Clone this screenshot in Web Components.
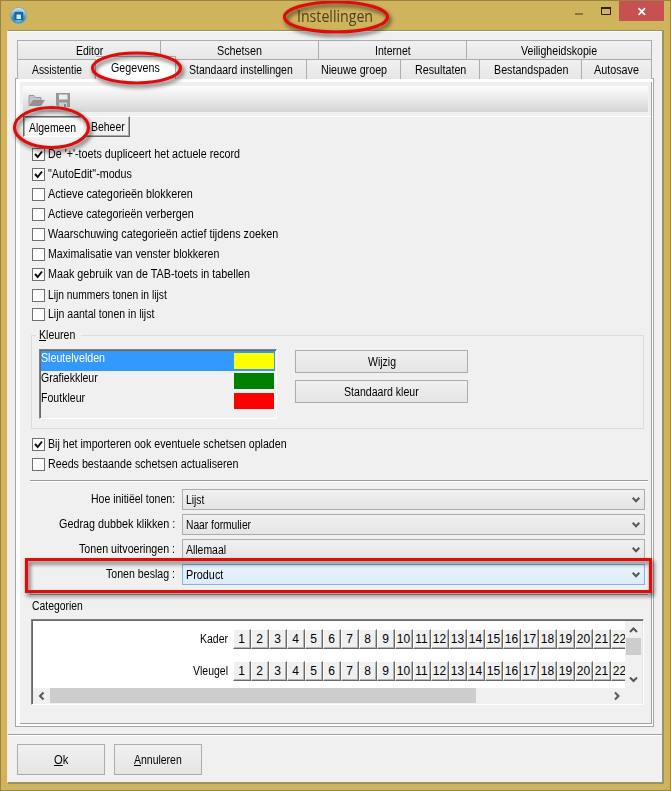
<!DOCTYPE html>
<html lang="nl">
<head>
<meta charset="utf-8">
<title>Instellingen</title>
<style>
html,body{margin:0;height:100%;overflow:hidden}
body{font:12px/14px "Liberation Sans",Arial,sans-serif;color:#000}
</style>
</head>
<body>
<settings-window></settings-window>
<script>
const define=(name,css,html,after)=>customElements.define(name,class extends HTMLElement{
  connectedCallback(){
    if(this.shadowRoot)return;
    const r=this.attachShadow({mode:'open'});
    const t=document.createElement('template');
    t.innerHTML=`<style>*{box-sizing:border-box}:host{box-sizing:border-box}${css}</style>`+(typeof html==='function'?html(this):html);
    r.append(t.content.cloneNode(true));
    if(after)after(this,r);
  }
});

// Condenses its text to the width given in "w".
define('fit-text',':host{display:inline-block;white-space:nowrap;text-align:left;flex:none}span{display:inline-block;transform-origin:0 0}','<span><slot></slot></span>',(h,r)=>{
  const s=r.querySelector('span'),w=+h.getAttribute('w');
  s.style.transform=`scaleX(${w/s.offsetWidth})`;
  h.style.width=w+'px';
});

define('title-bar',`
:host{display:flex;height:30px;position:relative;align-items:flex-start;justify-content:space-between}
.logo{margin:6px 0 0 8.5px;display:block}
.title{position:absolute;left:296px;top:4px;font:16px/22px "Open Sans",sans-serif;color:#4d3f1d}
.controls{display:flex;align-items:flex-start;margin-right:6px}
svg{display:block}
.close{width:45px;height:20px;background:#c75050;margin-top:0}`,`
<svg class="logo" width="17" height="17" viewBox="0 0 17 17"><defs><radialGradient id="g" cx=".5" cy=".75" r=".75"><stop offset="0" stop-color="#6fd0f5"/><stop offset=".45" stop-color="#2b84bd"/><stop offset=".8" stop-color="#a9cfe2"/><stop offset="1" stop-color="#e8f3f6"/></radialGradient></defs><circle cx="8.5" cy="8.5" r="8" fill="url(#g)" stroke="#6fa0b5" stroke-width=".8"/><path d="M4.500 5h8.500v8H4.500z" fill="#1762a0"/><path d="M6.500 7.500h4.500v4.500h-4.500z" fill="#c6edfb"/></svg>
<div class="title"><fit-text w="76">Instellingen</fit-text></div>
<div class="controls"><svg width="44" height="20"><path d="M0 12h8v2H0z" fill="#8c7538"/><path d="M26.5 7h9v6.500h-9z" fill="none" stroke="#2a220b"/><path d="M26 7h10" stroke="#2a220b" stroke-width="2"/></svg><svg class="close" viewBox="0 0 45 20"><path d="M19.500 7.200l6.500 6.600M26 7.200l-6.500 6.600" stroke="#fff" stroke-width="1.8"/></svg></div>`);

define('tab-row',':host{display:flex;height:20px;border-left:1px solid #acacac}','<slot></slot>');
define('tab-item',`
:host{display:flex;justify-content:center;align-items:center;flex:none;width:var(--w);background:linear-gradient(#f1f1f1,#e6e6e6);border:1px solid #acacac;border-width:1px 1px 0 0;padding-top:1px;height:20px}
:host([on]){background:#fff;position:relative;height:23px;margin:-3px 0 0;border-color:#acacac;padding:0 0 1px}`,'<slot></slot>');

define('check-row',`
:host{display:flex;height:20px;align-items:center;gap:3px;padding-left:12px}
i{display:block;width:13px;height:13px;border:1px solid #707070;background:#fff}
svg{display:block}`,h=>`<i>${h.hasAttribute('on')?'<svg width="11" height="11"><path d="M2 5l2.7 3L9 2.500" fill="none" stroke="#111" stroke-width="2"/></svg>':''}</i><slot></slot>`);

define('push-button',':host{display:flex;align-items:center;justify-content:center;border:1px solid #acacac;background:linear-gradient(#f0f0f0,#e5e5e5)}','<slot></slot>');

define('combo-row',`
:host{display:flex;height:25px;align-items:flex-start}
.l{width:155px;text-align:right;padding-top:3px;flex:none}
.box{margin-left:7px;width:463px;height:21px;border:1px solid #acacac;background:linear-gradient(#f0f0f0,#e5e5e5);display:flex;align-items:center;justify-content:space-between;padding:1px 4px 0 3px}
:host([hot]) .box{border-color:#7eb4ea;background:linear-gradient(#e9f3fc,#dcecfc)}`,
`<div class="l"><slot name="label"></slot></div><div class="box"><slot></slot><svg width="8" height="6"><path d="M.7 .8L4 4.2 7.3 .8" fill="none" stroke="#555" stroke-width="2"/></svg></div>`);

define('color-row',`
:host{display:flex;height:20px;justify-content:space-between;padding:0 1px 0 0}
:host([on]){background:#39f;color:#fff}
i{display:block;width:40px;height:16px;margin-top:2px;background:var(--c)}`,'<slot></slot><i></i>');

define('group-box',`
:host{display:block;position:relative;margin:0 0 0 11px;width:613px;height:94px;border:1px solid #dcdcdc}
.leg{position:absolute;left:4px;top:-8px;background:#f0f0f0;padding:0 6px 0 3px;height:15px}
.in{display:flex;padding:13px 0 0 7px;gap:18px}
.list{width:238px;height:70px;border:1px solid;border-color:#808080 #fff #fff #808080;padding:1px;box-shadow:inset 1px 1px #696969}
.b{display:flex;flex-direction:column;gap:7px;padding-top:1px}
push-button{width:173px;height:23px}`,`
<div class="leg"><fit-text w="36"><u>K</u>leuren</fit-text></div>
<div class="in"><div class="list"><color-row on style="--c:#ff0"><fit-text w="64">Sleutelvelden</fit-text></color-row><color-row style="--c:#008000"><fit-text w="57">Grafiekkleur</fit-text></color-row><color-row style="--c:#f00"><fit-text w="44">Foutkleur</fit-text></color-row></div>
<div class="b"><push-button><fit-text w="28">Wijzig</fit-text></push-button><push-button><fit-text w="75">Standaard kleur</fit-text></push-button></div></div>`);

define('number-row',`
:host{display:flex;height:20px;overflow:hidden}
.l{width:195px;text-align:right;padding-top:3px;flex:none;margin-right:5px}
.n{flex:none;width:18px;height:20px;display:flex;justify-content:center;align-items:center;background:#f0f0f0;border:1px solid;border-color:#fff #696969 #696969 #fff;box-shadow:inset -1px -1px #b4b4b4;padding-right:1px}`,
h=>`<div class="l"><slot></slot></div>${Array.from({length:22},(_,i)=>`<div class="n">${i+1}</div>`).join('')}`);

define('category-grid',`
:host{display:grid;grid-template:67px 16px / 592px 17px;margin-left:11px;width:613px;height:86px;background:#fff;border:1px solid;border-color:#808080 #fff #fff #808080;box-shadow:inset 1px 1px #696969,inset -1px -1px #e3e3e3;padding:1px;overflow:hidden}
.rows{padding-top:8px;display:flex;flex-direction:column;gap:12px;overflow:hidden}
.v,.h,.c{background:#f0f0f0}
.v{display:flex;flex-direction:column;padding-left:1px}
.h{display:flex}
.tv{height:17px;background:#cdcdcd;margin-right:1px}.th{width:426px;background:#cdcdcd;margin-bottom:1px}
svg{display:block;flex:none}path{fill:none;stroke:#555;stroke-width:2}`,`
<div class="rows"><number-row><fit-text w="28">Kader</fit-text></number-row><number-row><fit-text w="35">Vleugel</fit-text></number-row></div>
<div class="v"><svg width="15" height="17"><path d="M4 11L7.5 7.500 11 11"/></svg><div class="tv"></div><svg width="15" height="33"><path d="M4 22.500L7.500 26l3.500-3.500"/></svg></div>
<div class="h"><svg width="17" height="16"><path d="M10.500 4.500L7 8l3.500 3.500"/></svg><div class="th"></div><div style="flex:1"></div><svg width="17" height="16"><path d="M7 4.500L10.500 8 7 11.500"/></svg></div><div class="c"></div>`);

define('tool-bar',`
:host{display:flex;height:26px;margin:3px 3px 0;background:linear-gradient(#fdfdfd,#d5d5d5);align-items:flex-start;padding:7px 0 0 5px;gap:10px}svg{display:block}`,`
<svg width="18" height="15"><path d="M1 13V2.500h5l1.500 2H13V7" fill="#c4c4c4" stroke="#999"/><path d="M1 13L5 7h12l-4 6z" fill="#929292"/></svg>
<svg width="15" height="15"><path d="M0 0h14v14H2l-2-2z" fill="#969696"/><path d="M3 1.500h8.500v5H3z" fill="#eee"/><path d="M3 9.500h8v4.500H3z" fill="#ccc"/><path d="M8 11h2v3H8z" fill="#888"/></svg>`);

define('sub-tabs',`
:host{display:flex;height:21px;margin-left:3px}
div{display:flex;align-items:center;height:21px;border:1px solid}
.a{width:59px;background:#f8f8f8;border-color:#696969 #fff #fff #696969;box-shadow:inset 1px 1px #aaa;padding:2px 0 0 5px}
.b{width:48px;border-color:#fff #696969 #696969 #fff;box-shadow:inset -1px -1px #a8a8a8;padding-left:8px}`,`
<div class="a"><fit-text w="47">Algemeen</fit-text></div><div class="b"><fit-text w="34">Beheer</fit-text></div>`);

define('callout-marks',`
:host{position:absolute;inset:-1px;z-index:10;pointer-events:none}svg{display:block}`,`
<svg width="671" height="791"><defs><filter id="s" x="-20%" y="-40%" width="140%" height="190%"><feDropShadow dx="2" dy="3" stdDeviation="2" flood-color="#000" flood-opacity=".6"/></filter></defs>
<g fill="none" stroke="#dc1010" stroke-width="3.2"><ellipse cx="336" cy="17" rx="51.500" ry="15" filter="url(#s)"/><ellipse cx="136.500" cy="68" rx="44" ry="15" filter="url(#s)"/><ellipse cx="51.500" cy="127.500" rx="37" ry="20" filter="url(#s)"/><path d="M26.500 559.500H650.500V591.500H26.500z" filter="url(#s)"/></g></svg>`);

define('settings-window',`
:host{display:block;position:relative;width:671px;height:791px;background:#cfb35d;border:1px solid #9c8344;overflow:hidden}
.client{margin:-1px 0 0 6px;width:657px;height:754px;border:1px solid;border-color:#9b9263 #9b9263 #9b9263 #f5edcd;border-bottom-width:2px;border-right-width:2px;background:#f0f0f0;box-shadow:inset 0 1px #fff}
.tabs{padding:9px 0 0 9px}
.panel{margin:-1px 0 0 7px;width:639px;height:649px;border:1px solid #a6a6a6;background:#fff;padding:3px 1px 2px 4px}
.tabs tab-row{position:relative}
.tabs .sel{z-index:2}
.inner{height:642px;background:#f0f0f0;border-right:1px solid #a0a0a0;border-bottom:1px solid #a0a0a0}
.top{height:35px;border-bottom:1px solid #fff;padding-top:1px;margin-bottom:-1px}
.hr{height:2px;border-top:1px solid #999;border-bottom:1px solid #fff;margin:0 3px 0 10px}
.checks{padding-top:7px}
.foot{margin-top:7px;border-top:1px solid #a0a0a0;box-shadow:inset 0 1px #fff;padding:9px 0 0 9px;display:flex;gap:9px}
.foot push-button{width:88px;height:31px}
.cat{margin:3px 0 6px 12px;height:14px}`,`
<title-bar></title-bar>
<div class="client">
<div class="tabs">
<tab-row><tab-item style="--w:143px"><fit-text w="27">Editor</fit-text></tab-item><tab-item style="--w:158px"><fit-text w="45">Schetsen</fit-text></tab-item><tab-item style="--w:148px"><fit-text w="36">Internet</fit-text></tab-item><tab-item style="--w:185px"><fit-text w="76">Veiligheidskopie</fit-text></tab-item></tab-row>
<tab-row class="sel" style="margin-top:-1px"><tab-item style="--w:78px"><fit-text w="50">Assistentie</fit-text></tab-item><tab-item on style="--w:80px"><fit-text w="49">Gegevens</fit-text></tab-item><tab-item style="--w:131px"><fit-text w="104">Standaard instellingen</fit-text></tab-item><tab-item style="--w:94px"><fit-text w="66">Nieuwe groep</fit-text></tab-item><tab-item style="--w:79px"><fit-text w="51">Resultaten</fit-text></tab-item><tab-item style="--w:102px"><fit-text w="74">Bestandspaden</fit-text></tab-item><tab-item style="--w:70px"><fit-text w="45">Autosave</fit-text></tab-item></tab-row>
</div>
<div class="panel"><div class="inner">
<div class="top"><tool-bar></tool-bar></div>
<sub-tabs></sub-tabs>
<div class="checks">
<check-row on><fit-text w="192">De '+'-toets dupliceert het actuele record</fit-text></check-row>
<check-row on><fit-text w="84">"AutoEdit"-modus</fit-text></check-row>
<check-row><fit-text w="145">Actieve categorieën blokkeren</fit-text></check-row>
<check-row><fit-text w="146">Actieve categorieën verbergen</fit-text></check-row>
<check-row><fit-text w="230">Waarschuwing categorieën actief tijdens zoeken</fit-text></check-row>
<check-row><fit-text w="171">Maximalisatie van venster blokkeren</fit-text></check-row>
<check-row on><fit-text w="202">Maak gebruik van de TAB-toets in tabellen</fit-text></check-row>
<check-row style="margin-top:1px"><fit-text w="119">Lijn nummers tonen in lijst</fit-text></check-row>
<check-row style="margin-top:-1px"><fit-text w="106">Lijn aantal tonen in lijst</fit-text></check-row>
</div>
<group-box style="margin-top:11px"></group-box>
<check-row on style="margin-top:5px"><fit-text w="239">Bij het importeren ook eventuele schetsen opladen</fit-text></check-row>
<check-row><fit-text w="190">Reeds bestaande schetsen actualiseren</fit-text></check-row>
<div class="hr" style="margin-top:6px;margin-bottom:7px"></div>
<combo-row><fit-text slot="label" w="84">Hoe initiëel tonen:</fit-text><fit-text w="18">Lijst</fit-text></combo-row>
<combo-row><fit-text slot="label" w="116">Gedrag dubbek klikken :</fit-text><fit-text w="65">Naar formulier</fit-text></combo-row>
<combo-row><fit-text slot="label" w="96">Tonen uitvoeringen :</fit-text><fit-text w="40">Allemaal</fit-text></combo-row>
<combo-row hot><fit-text slot="label" w="69">Tonen beslag :</fit-text><fit-text w="37">Product</fit-text></combo-row>
<div class="hr" style="margin-top:5px"></div>
<div class="cat"><fit-text w="51">Categorien</fit-text></div>
<category-grid></category-grid>
</div></div>
<div class="foot"><push-button><fit-text w="14"><u>O</u>k</fit-text></push-button><push-button><fit-text w="48"><u>A</u>nnuleren</fit-text></push-button></div>
</div>
<callout-marks></callout-marks>`);
</script>
</body>
</html>
